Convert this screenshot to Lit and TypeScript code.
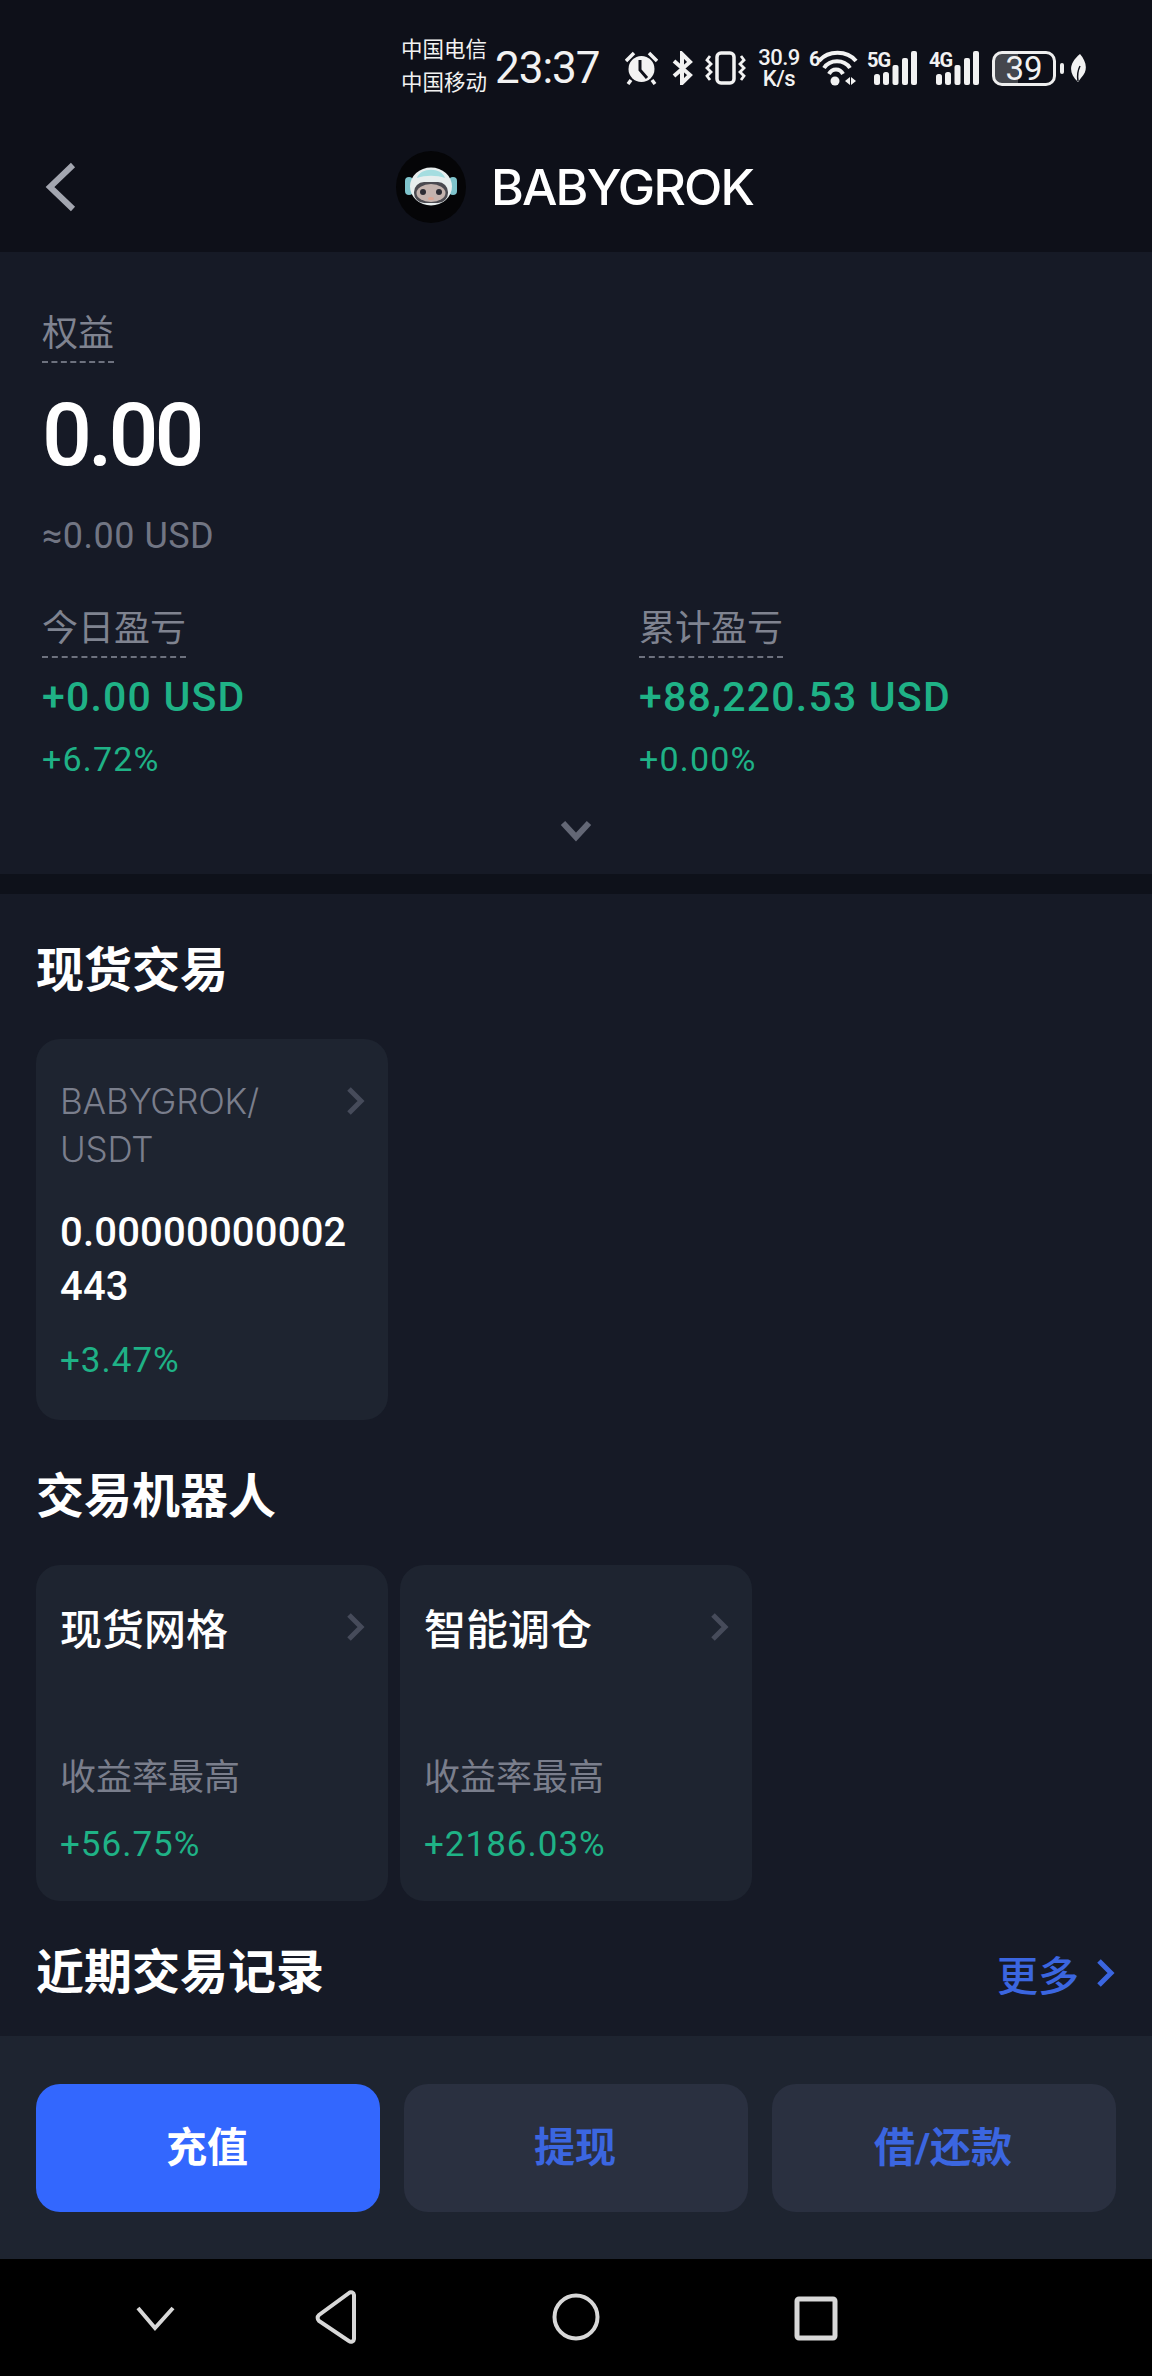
import { LitElement, html, css } from "lit";
import { customElement } from "lit/decorators.js";

const chev = () => html`<svg class="chev" viewBox="0 0 19 30"><path d="M3 3l12 12L3 27" fill="none" stroke="#464b5a" stroke-width="5"/></svg>`;

const bars = () => html`<svg class="bars" viewBox="0 0 43 34">
  <rect x="0" y="23" width="6" height="11" rx="2.5"/>
  <rect x="9" y="21" width="6" height="13" rx="2.5"/>
  <rect x="18.500" y="14" width="6" height="20" rx="2"/>
  <rect x="28" y="7" width="6" height="27" rx="2"/>
  <rect x="37" y="0" width="6" height="34" rx="2"/>
</svg>`;

@customElement("app-root")
export class AppRoot extends LitElement {
  static styles = css`
    :host { display: block; width: 1152px; height: 2376px; background: #161a26; color: #fff; font-family: "Roboto", "Noto Sans CJK SC", sans-serif; overflow: hidden; }
    * { box-sizing: border-box; }
    .page { display: flex; flex-direction: column; height: 2376px; }
    .top { height: 252px; background: #0e1019; flex: none; display: flex; flex-direction: column; }

    .status { height: 136px; flex: none; display: flex; align-items: center; padding-left: 401px; color: #f2f2f2; }
    .status > * { flex: none; }
    .carriers { font-size: 21.500px; line-height: 33px; width: 94px; margin-top: -5px; white-space: nowrap; }
    .clock { font-size: 44px; font-weight: 400; line-height: 1; width: 130px; letter-spacing: -1px; }
    .alarm { width: 33px; height: 34px; margin-right: 14px; }
    .bt { width: 21px; height: 34px; margin-right: 12px; }
    .vib { width: 45px; height: 34px; margin-right: 8px; }
    .speed { width: 42px; margin-right: 9px; font-size: 22px; font-weight: 500; line-height: 21.500px; text-align: center; letter-spacing: -0.5px; white-space: nowrap; }
    .six { width: 9px; font-size: 20px; font-weight: 700; line-height: 20px; margin-bottom: 18px; }
    .wifi { width: 40px; height: 36px; margin-right: 9px; }
    .sig { display: flex; align-items: flex-start; height: 36px; margin-right: 12px; }
    .sig span { width: 24px; font-size: 20px; font-weight: 700; line-height: 18px; margin-top: 1px; letter-spacing: -1px; }
    .bars { width: 43px; height: 34px; margin-left: -17px; margin-top: 1px; fill: #f2f2f2; }
    .batt { width: 64px; height: 35px; margin-left: 1px; border: 3px solid #eee; border-radius: 10px; display: flex; align-items: center; justify-content: center; font-size: 33px; font-weight: 400; background: linear-gradient(90deg, #45474d 0 40%, transparent 40%); }
    .nub { width: 4px; height: 11px; border-radius: 2px; background: #eee; margin-left: 4px; }
    .leaf { width: 17px; height: 28px; margin-left: 6px; }

    .nav { height: 102px; flex: none; position: relative; display: flex; align-items: center; justify-content: center; }
    .back { position: absolute; left: 44px; top: 26px; width: 32px; height: 50px; }
    .title { display: flex; align-items: center; gap: 25px; font-size: 50px; font-weight: 500; font-family: "Inter", "Roboto", sans-serif; letter-spacing: -1.8px; padding-right: 3px; }
    .avatar { width: 70px; height: 72px; display: block; }

    .summary { height: 622px; flex: none; padding: 60px 42px 0; background: #161a26; position: relative; }
    .label { font-size: 36px; color: #7f8390; display: inline-block; border-bottom: 2px dashed #6d717e; line-height: 44px; padding-bottom: 5px; }
    .equity { font-size: 88px; font-weight: 500; line-height: 100px; margin-top: 22px; letter-spacing: -4px; }
    .usd { color: #717583; font-size: 36px; line-height: 44px; margin-top: 29px; letter-spacing: 0.5px; }
    .pnl { display: grid; grid-template-columns: 597px 1fr; margin-top: 49px; }
    .pnl .amt { color: #1fb286; font-size: 41px; font-weight: 500; line-height: 50px; margin-top: 14px; letter-spacing: 1.2px; }
    .pnl .pct { color: #1fb286; font-size: 34px; line-height: 40px; margin-top: 17px; letter-spacing: 1.2px; }
    .expand { position: absolute; left: 560px; top: 568px; width: 32px; height: 22px; }

    .gap { height: 20px; flex: none; background: #0e111a; }
    .main { flex: 1; padding: 0 36px; min-height: 0; }
    h2 { margin: 0; font-size: 48px; font-weight: 700; line-height: 60px; }
    .spot h2 { padding-top: 47px; }
    .cards { display: flex; gap: 12px; }
    .card { width: 352px; background: #1e2430; border-radius: 24px; padding: 24px; position: relative; }
    .chev { position: absolute; right: 23px; top: 47px; width: 19px; height: 30px; }
    .spot .cards { margin-top: 38px; }
    .spot .card { height: 381px; padding-top: 38px; }
    .pair { color: #7a7e8c; font-size: 35px; line-height: 48px; width: 270px; font-family: "Inter", "Roboto", sans-serif; font-weight: 300; letter-spacing: -0.2px; }
    .price { font-size: 40px; font-weight: 500; line-height: 54px; margin-top: 33px; letter-spacing: 0.2px; }
    .green { color: #1fb286; font-size: 35px; line-height: 40px; letter-spacing: 1px; }
    .spot .green { margin-top: 27px; }
    .bots { margin-top: 47px; }
    .bots .cards { margin-top: 38px; }
    .bots .card { height: 336px; }
    .bots .name { font-size: 42px; font-weight: 500; line-height: 56px; margin-top: 14px; }
    .bots .sub { color: #7a7e8c; font-size: 36px; line-height: 46px; margin-top: 96px; }
    .bots .green { margin-top: 24px; }
    .recent { display: flex; justify-content: space-between; align-items: center; margin-top: 42px; }
    .more { display: flex; align-items: center; gap: 16px; color: #3b66e0; font-size: 41px; font-weight: 500; padding-right: 1px; }
    .more svg { width: 20px; height: 30px; }

    .actions { height: 223px; flex: none; background: #1e2430; display: grid; grid-template-columns: repeat(3, 344px); gap: 24px; padding: 48px 36px 0; }
    .btn { height: 128px; border-radius: 24px; display: flex; align-items: center; justify-content: center; font-size: 41px; font-weight: 700; background: #2a3040; color: #3b66e0; padding: 0 2px 8px 0; }
    .btn.primary { background: #3367fe; color: #fff; }
    .sys { height: 117px; flex: none; background: #000; display: block; width: 1152px; }
  `;

  render() {
    return html`<div class="page">
      <div class="top">
        <div class="status">
          <div class="carriers">中国电信<br />中国移动</div>
          <div class="clock">23:37</div>
          <svg class="alarm" viewBox="0 0 33 34">
            <circle cx="16.500" cy="18" r="13" fill="#f2f2f2"/>
            <path d="M15 9v10l7 8" fill="none" stroke="#0e1019" stroke-width="3"/>
            <path d="M1 10l8-8M32 10l-8-8M6 29l-3 4M27 29l3 4" fill="none" stroke="#f2f2f2" stroke-width="3.500"/>
          </svg>
          <svg class="bt" viewBox="0 0 21 34">
            <path d="M2 10l16 14-8 8V3l8 8L2 25" fill="none" stroke="#f2f2f2" stroke-width="4"/>
          </svg>
          <svg class="vib" viewBox="0 0 45 34" fill="none" stroke="#f2f2f2">
            <rect x="12" y="2" width="17" height="30" rx="4" stroke-width="3.500"/>
            <path d="M5 5L2 9l4 4-4 4 4 4-4 4 3 4M36 5l3 4-4 4 4 4-4 4 4 4-3 4" stroke-width="2.800"/>
          </svg>
          <div class="speed">30.9<br />K/s</div>
          <div class="six">6</div>
          <svg class="wifi" viewBox="0 0 40 36" fill="none" stroke="#f2f2f2" stroke-width="4">
            <path d="M1 11C10 0 29 0 38 11"/>
            <path d="M6 18C12 9 26 9 32 18"/>
            <path d="M11 24C14 18 22 18 25 24"/>
            <circle cx="17" cy="31" r="4.500" fill="#f2f2f2" stroke="none"/>
            <path d="M27 31l5-4v8zM33 27l5 4-5 4z" fill="#f2f2f2" stroke="none"/>
          </svg>
          <div class="sig"><span>5G</span>${bars()}</div>
          <div class="sig"><span>4G</span>${bars()}</div>
          <div class="batt">39</div>
          <div class="nub"></div>
          <svg class="leaf" viewBox="0 0 17 28">
            <path d="M10 0c6 7 9 16 1 24l-3 4c-10-9-9-19 2-28z" fill="#f2f2f2"/>
            <path d="M8 27c-1-6 0-11 2-15" fill="none" stroke="#0e1019" stroke-width="1.500"/>
          </svg>
        </div>
        <div class="nav">
          <svg class="back" viewBox="0 0 32 50"><path d="M29 3L6 25l23 22" fill="none" stroke="#a3a6b0" stroke-width="6"/></svg>
          <div class="title">
            <svg class="avatar" viewBox="0 0 70 72">
              <ellipse cx="35" cy="36" rx="35" ry="36" fill="#050507"/>
              <rect x="9" y="26" width="8" height="18" rx="4" fill="#7fc4cc"/>
              <rect x="53" y="26" width="8" height="18" rx="4" fill="#7fc4cc"/>
              <ellipse cx="35" cy="35.500" rx="21" ry="19" fill="#e8eeee"/>
              <path d="M21 27c3-11 25-11 28 0-8-3-20-3-28 0z" fill="#a5dde0"/>
              <rect x="18" y="31" width="34" height="21" rx="10" fill="#4b4a50"/>
              <ellipse cx="35" cy="42" rx="14.500" ry="9" fill="#c4b3ae"/>
              <circle cx="27" cy="41" r="3" fill="#2b2b33"/>
              <circle cx="43" cy="41" r="3" fill="#2b2b33"/>
              <ellipse cx="35" cy="47.500" rx="3" ry="1.600" fill="#dba593"/>
            </svg>
            <span>BABYGROK</span>
          </div>
        </div>
      </div>
      <div class="summary">
        <div class="label">权益</div>
        <div class="equity">0.00</div>
        <div class="usd">≈0.00 USD</div>
        <div class="pnl">
          <div>
            <div class="label">今日盈亏</div>
            <div class="amt">+0.00 USD</div>
            <div class="pct">+6.72%</div>
          </div>
          <div>
            <div class="label">累计盈亏</div>
            <div class="amt">+88,220.53 USD</div>
            <div class="pct">+0.00%</div>
          </div>
        </div>
        <svg class="expand" viewBox="0 0 32 22"><path d="M3 3l13 14L29 3" fill="none" stroke="#636775" stroke-width="6"/></svg>
      </div>
      <div class="gap"></div>
      <div class="main">
        <section class="spot">
          <h2>现货交易</h2>
          <div class="cards">
            <div class="card">
              ${chev()}
              <div class="pair">BABYGROK/<br />USDT</div>
              <div class="price">0.00000000002<br />443</div>
              <div class="green">+3.47%</div>
            </div>
          </div>
        </section>
        <section class="bots">
          <h2>交易机器人</h2>
          <div class="cards">
            <div class="card">
              ${chev()}
              <div class="name">现货网格</div>
              <div class="sub">收益率最高</div>
              <div class="green">+56.75%</div>
            </div>
            <div class="card">
              ${chev()}
              <div class="name">智能调仓</div>
              <div class="sub">收益率最高</div>
              <div class="green">+2186.03%</div>
            </div>
          </div>
        </section>
        <div class="recent">
          <h2>近期交易记录</h2>
          <div class="more">更多<svg viewBox="0 0 20 30"><path d="M4 3l12 12L4 27" fill="none" stroke="#3b66e0" stroke-width="5"/></svg></div>
        </div>
      </div>
      <div class="actions">
        <div class="btn primary">充值</div>
        <div class="btn">提现</div>
        <div class="btn">借/还款</div>
      </div>
      <svg class="sys" viewBox="0 0 1152 117" fill="none" stroke="#d8d8d8">
        <path d="M138 49l17 20 18-20" stroke-width="4"/>
        <path d="M354 40v40a3 3 0 0 1-5 2L319 62a4 4 0 0 1 0-6l30-22a3 3 0 0 1 5 2z" stroke-width="4"/>
        <circle cx="576" cy="58" r="21.500" stroke-width="4"/>
        <rect x="797" y="40" width="38" height="39" rx="2" stroke-width="5"/>
      </svg>
    </div>`;
  }
}
